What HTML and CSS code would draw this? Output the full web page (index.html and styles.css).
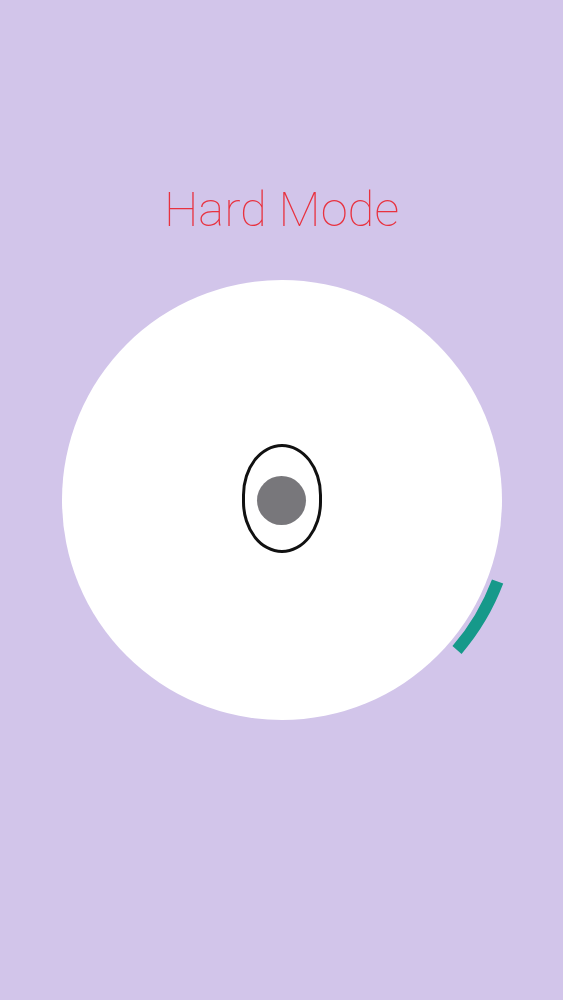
FILE: index.html
```html
<!DOCTYPE html>
<html lang="en">
<head>
  <meta charset="UTF-8" />
  <meta name="viewport" content="width=device-width, initial-scale=1.0"/>
  <title>Hard Mode</title>
  <link rel="stylesheet" href="styles.css">
</head>
<body>

<div class="screen">
  <h1 class="title">Hard Mode</h1>

  <div class="dial">
    <div class="eye">
      <div class="pupil"></div>
    </div>
    <svg class="arc" viewBox="0 0 440 440" width="440" height="440">
      <path d="M 435.6 301.5 A 230.5 230.5 0 0 1 395 370" />
    </svg>
  </div>
</div>

</body>
</html>
```

FILE: styles.css
```css
body {
  margin: 0;
  background-color: #d2c5ea;
  font-family: Roboto, "Liberation Sans", sans-serif;
}

.screen {
  height: 1000px;
  display: flex;
  flex-direction: column;
  align-items: center;
  padding-top: 185px;
  box-sizing: border-box;
}

.title {
  margin: 0;
  font-size: 49px;
  font-weight: 100;
  line-height: 1;
  color: #e8323f;
}

.dial {
  position: relative;
  width: 440px;
  height: 440px;
  margin-top: 46px;
  border-radius: 50%;
  background-color: #fff;
  display: flex;
  align-items: center;
  justify-content: center;
}

.eye {
  width: 80px;
  height: 109px;
  margin-bottom: 4px;
  box-sizing: border-box;
  border: 3px solid #111;
  border-radius: 40px / 51px;
  display: flex;
  align-items: center;
  justify-content: center;
}

.pupil {
  width: 49px;
  height: 49px;
  margin-top: 4px;
  border-radius: 50%;
  background-color: #78777b;
}

.arc {
  position: absolute;
  top: 0;
  left: 0;
  overflow: visible;
}

.arc path {
  fill: none;
  stroke: #16998a;
  stroke-width: 12;
}
```
